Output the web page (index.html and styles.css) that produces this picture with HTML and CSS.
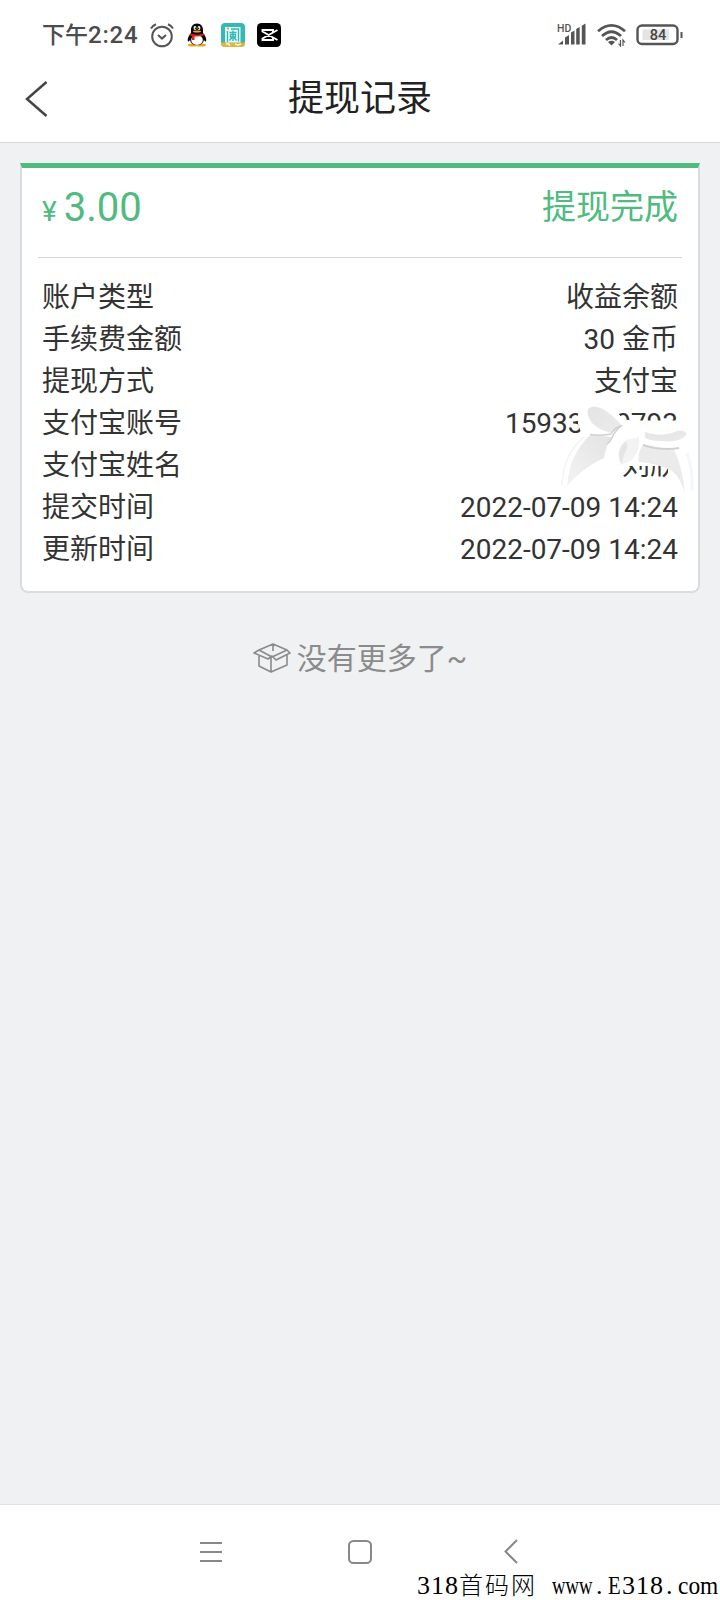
FILE: index.html
```html
<!DOCTYPE html>
<html lang="zh-CN">
<head>
<meta charset="utf-8">
<title>提现记录</title>
<link rel="stylesheet" href="styles.css">
</head>
<body>
<div class="screen">
  <div class="status">
    <span class="clock">下午<span class="digits">2:24</span></span>
    <svg class="ic alarm" width="24" height="25" viewBox="0 0 24 25" fill="none" stroke="#555" stroke-width="2"><circle cx="12" cy="13.5" r="9.8"/><path d="M1 5.5Q3 2.5 6 1.3M18 1.3Q21 2.5 23 5.5M8 12l4 3.600 4-3.600"/></svg>
    <svg class="ic qq" width="20" height="24" viewBox="0 0 20 24"><ellipse cx="6" cy="22" rx="5" ry="1.500" fill="#eaa21c"/><ellipse cx="14" cy="22" rx="5" ry="1.500" fill="#eaa21c"/><path d="M10 .5C5.800.5 4 3.500 4 7v3C2 12.500 0 15.500 1 18.500c.5.5 1.500-.8 2-1.500 1 4 3.500 5 7 5s6-1 7-5c.5.700 1.500 2 2 1.500 1-3-1-6-3-8.500V7C16 3.500 14.200.5 10 .5z" fill="#080808"/><ellipse cx="10" cy="17" rx="5.800" ry="5" fill="#fff"/><ellipse cx="8" cy="5" rx="1.400" ry="2" fill="#fff"/><ellipse cx="12" cy="5" rx="1.400" ry="2" fill="#fff"/><circle cx="8.400" cy="5.200" r=".7"/><circle cx="11.600" cy="5.200" r=".7"/><ellipse cx="10" cy="8.500" rx="4" ry="1.100" fill="#efa51d"/><path d="M3 10.500Q10 12.800 17 10.500L17.500 12Q12 14 7.500 13.500V17H5V13L2.500 12z" fill="#df2020"/></svg>
    <svg class="ic app" width="24" height="24" viewBox="0 0 24 24"><rect width="24" height="24" rx="4" fill="#35b8b6"/><path d="M0 19.500h24v.5a4 4 0 0 1-4 4H4a4 4 0 0 1-4-4z" fill="#e1b444"/><rect x="4" y="4" width="15.500" height="15.500" fill="#e9fbfa"/><path d="M6.500 8v11M10 6h7.500V18.500M8.500 9.500h7M12 7.500v10.500" fill="none" stroke="#35b8b6" stroke-width="1.400"/><path d="M9.500 11.500h5v2.500h-5zM11.500 14l-3 3.500M12.500 14l3 3.500" fill="none" stroke="#35b8b6" stroke-width="1.400"/><circle cx="7" cy="5.500" r="1.200" fill="#e1b444"/><path d="M5 21h3l1 2M14 21l3 1 3-1" fill="none" stroke="#fff2c8" stroke-width="1.500"/></svg>
    <svg class="ic cut" width="24" height="24" viewBox="0 0 24 24"><rect width="24" height="24" rx="4.500" fill="#000"/><path d="M20.500 7L5.500 15.500V17H16V15M20.500 17L5.500 8.500V7H16V9" fill="none" stroke="#fff" stroke-width="1.900"/></svg>
    <svg class="ic signal" width="30" height="24" viewBox="0 0 30 24"><text x="0" y="8.500" class="hd">HD</text><path d="M1 21.500l5-4v4zM8 14.500l4-2.500v9.500H8zM14 9.500l3.500-2v14H14zM19.200 6l3.500-2v17.500h-3.500zM24.800 2.800l3.700-2.300v21h-3.700z" fill="#555"/></svg>
    <svg class="ic wifi" width="30" height="24" viewBox="0 0 30 24"><g fill="none" stroke="#555" stroke-width="2.800"><path d="M1 8.300Q14.500-3.500 28 8.300M5 13Q14.500 4.500 24 13M9 17Q14.500 12 20 17"/></g><path d="M11 19q3.500-2.600 7 0l-3.500 3.500z" fill="#555"/><path d="M23.500 17v6l-2-2.500M26 23v-6l2 2.500" fill="none" stroke="#555" stroke-width="1.200"/></svg>
    <svg class="ic battery" width="48" height="22" viewBox="0 0 48 22"><rect x="1.500" y="1.500" width="40" height="18.500" rx="4.500" fill="none" stroke="#555" stroke-width="2.400"/><rect x="6.500" y="5.500" width="26.500" height="10.500" fill="#e4e4e4"/><path d="M44.500 8h2v6h-2z" fill="#555"/><text x="22" y="16" class="level" text-anchor="middle">84</text></svg>
  </div>
  <div class="titlebar">
    <svg class="back" width="24" height="38" viewBox="0 0 24 38" fill="none" stroke="#444" stroke-width="2.500"><path d="M21.500 2L2 19l19.500 17"/></svg>
    <h1 class="title">提现记录</h1>
  </div>
  <main class="content">
    <section class="card">
      <div class="summary"><div class="amount"><span class="yen">¥</span>3.00</div><div class="state">提现完成</div></div>
      <div class="rows">
        <div class="row"><span>账户类型</span><span>收益余额</span></div>
        <div class="row"><span>手续费金额</span><span>30 金币</span></div>
        <div class="row"><span>提现方式</span><span>支付宝</span></div>
        <div class="row"><span>支付宝账号</span><span>15933100793</span></div>
        <div class="row"><span>支付宝姓名</span><span>刘欣</span></div>
        <div class="row"><span>提交时间</span><span>2022-07-09 14:24</span></div>
        <div class="row"><span>更新时间</span><span>2022-07-09 14:24</span></div>
      </div>
      <svg class="bow" width="150" height="105" viewBox="0 0 150 105">
        <defs>
          <linearGradient id="petal" x1="0" y1="0" x2="1" y2="1"><stop offset="0" stop-color="#e4e4e4"/><stop offset="1" stop-color="#ebebeb"/></linearGradient>
          <linearGradient id="tail" x1="1" y1="0" x2="0" y2="1"><stop offset="0" stop-color="#e3e3e3"/><stop offset="1" stop-color="#f3f3f3"/></linearGradient>
        </defs>
        <path d="M28 19Q34 3 53 8L68 18Q72 24 80 25.500H132Q146 32 136 48Q145 64 144 97L132 98L118 82V69L104 71H60Q40 71 16 92L10 90Q12 60 33 40Q26 30 28 19z" fill="#fff"/>
        <path d="M38 14Q43 9 53 14Q65 22 72 31Q67 34 61 38Q49 35 42 28Q36 20 38 14z" fill="url(#petal)"/>
        <path d="M40 40Q51 41 62 42Q56 50 54 63Q32 73 17 91Q19 60 40 40z" fill="url(#tail)"/>
        <path d="M40 39.500Q53 41 61 39Q65 32 71 31Q64 37 62 43Q60 47 57 49" fill="none" stroke="#d0d0d0" stroke-width="1.500"/>
        <path d="M12 90Q13 59 34 42" fill="none" stroke="#f3f3f3" stroke-width="1.500"/>
        <path d="M76 45Q64 55 71 70L82 65Q91 54 89 42z" fill="#f3f3f3"/>
        <path d="M75 47Q65 57 72 69Q73 60 77 53Q78 47 75 47z" fill="#e4e4e4"/>
        <path d="M95 37Q111 43 127 36Q137 35 136 40Q130 48 112 46Q97 46 95 42z" fill="url(#petal)"/>
        <path d="M93 50Q110 56 124 55Q132 70 135 98Q128 77 118 74Q104 68 89 67Q87 58 93 50z" fill="#ebebeb"/>
        <path d="M93 50Q112 56 129 53" fill="none" stroke="#d0d0d0" stroke-width="2"/>
        <path d="M137 58Q143 75 142 96" fill="none" stroke="#f6f6f6" stroke-width="3"/>
      </svg>
    </section>
    <div class="end"><svg width="38" height="30" viewBox="0 0 38 30" fill="none" stroke="#8b8b8b" stroke-width="1.600" stroke-linejoin="round"><path d="M6 7L20 1l14 6-15 7zM6 7L1 10l14 6 4-3 4 4 14-7-3-3M6 13v10l12 6 16-7V12M18 14v15M20 1v7"/></svg><span class="end-text">没有更多了~</span></div>
  </main>
  <nav class="nav">
    <svg class="menu" width="22" height="22" viewBox="0 0 22 22" stroke="#888" stroke-width="1.900"><path d="M0 2h22M0 11h22M0 20h22"/></svg>
    <svg class="home" width="24" height="24" viewBox="0 0 24 24" fill="none" stroke="#888" stroke-width="2"><rect x="1" y="1" width="22" height="22" rx="4.500"/></svg>
    <svg class="prev" width="14" height="25" viewBox="0 0 14 25" fill="none" stroke="#888" stroke-width="2"><path d="M13 1L1.500 12.500 13 24"/></svg>
    <div class="mark"><span class="num">318</span><span class="kai">首码网</span><span class="www">www</span><span class="dot">.</span><span class="cap">E</span><span class="num">318</span><span class="dot">.</span><span class="com">com</span></div>
  </nav>
</div>
</body>
</html>
```
FILE: styles.css
```css
* { box-sizing: border-box; }
body { margin: 0; font-family: Roboto, "Noto Sans CJK SC", sans-serif; color: #333; background: #eff1f3; }
.screen { width: 720px; height: 1600px; display: flex; flex-direction: column; }
svg { display: block; flex: none; }
.status { height: 68px; background: #fff; display: flex; align-items: center; padding: 2px 0 0 42px; }
.clock { width: 108px; font-size: 23px; font-weight: 500; color: #4c4c4c; white-space: nowrap; line-height: 34px; }
.digits { font-family: Roboto, sans-serif; font-size: 24px; letter-spacing: .8px; }
.qq { margin-left: 13px; }
.app { margin-left: 14px; }
.cut { margin-left: 12px; }
.signal { margin-left: 276px; }
.wifi { margin-left: 10px; }
.battery { margin-left: 9px; }
.hd { font: 500 10.500px Roboto, sans-serif; fill: #555; }
.level { font: 500 14.500px Roboto, sans-serif; fill: #444; }
.titlebar { height: 75px; background: #fff; border-bottom: 1px solid #d5d7d9; display: grid; grid-template-columns: 50px 1fr 50px; align-items: center; padding-bottom: 13px; }
.back { margin-left: 25px; }
.title { margin: 0; padding-top: 1px; text-align: center; font-size: 36px; line-height: 52px; font-weight: 400; color: #222; }
.content { flex: 1; padding: 20px 20px 0; }
.card { position: relative; height: 430px; background: #fff; border: 2px solid #dadcde; border-top: 5px solid #4fbb80; border-radius: 0 0 8px 8px; padding: 0 16px; }
.summary { height: 90px; display: flex; justify-content: space-between; border-bottom: 1px solid #d5d5d5; padding: 15px 4px 0; color: #4fbb80; }
.amount { font-size: 40px; line-height: 50px; }
.yen { font-size: 28px; margin-right: 7px; }
.state { font-size: 34px; line-height: 48px; }
.rows { padding: 19px 4px 0; font-size: 28px; }
.row { height: 42px; line-height: 42px; display: flex; justify-content: space-between; }
.bow { position: absolute; left: 528px; top: 227px; }
.end { margin-top: 41px; height: 48px; display: flex; align-items: center; justify-content: center; gap: 6px; font-size: 30px; color: #8b8b8b; }
.end-text { line-height: 44px; padding-top: 1px; }
.nav { position: relative; height: 96px; background: #fff; border-top: 1px solid #dfe1e3; display: flex; padding: 0 0 2px 200px; align-items: center; }
.home { margin-left: 126px; }
.prev { margin-left: 132px; }
.mark { position: absolute; left: 417px; bottom: 0; height: 30px; display: flex; align-items: baseline; color: #000; white-space: nowrap; font: 26px/30px "Liberation Serif", serif; }
.num { width: 42px; letter-spacing: 1px; }
.kai { width: 93px; font: 300 24px/28px "Noto Sans CJK SC", sans-serif; letter-spacing: 2px; }
.www, .cap, .com { transform-origin: left; }
.www { width: 42px; transform: scaleX(.720); }
.dot { width: 14px; padding-left: 2px; }
.cap { width: 14px; transform: scaleX(.8); }
.com { width: 41px; transform: scaleX(.9); }
```
